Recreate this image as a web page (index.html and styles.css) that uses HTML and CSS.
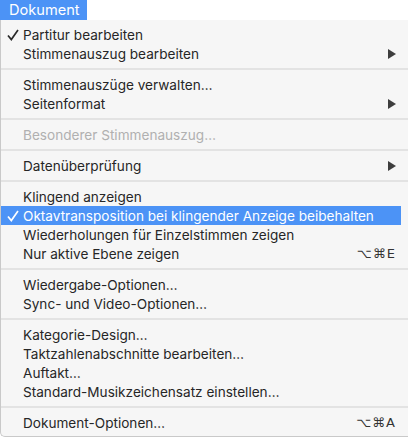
FILE: index.html
```html
<!DOCTYPE html>
<html>
<head>
<meta charset="utf-8">
<link rel="stylesheet" href="styles.css">
</head>
<body>
<div class="menubar"><span class="title">Dokument</span></div>
<div class="menu">
  <div class="item"><svg class="check" viewBox="0 0 12 12" width="12" height="12"><path d="M1 6.5 L4.3 10.5 L11 1" fill="none" stroke="currentColor" stroke-width="1.7" stroke-linejoin="miter"/></svg><span class="label">Partitur bearbeiten</span></div>
  <div class="item"><span class="label">Stimmenauszug bearbeiten</span><span class="arrow"></span></div>
  <div class="sep"></div>
  <div class="item"><span class="label">Stimmenauszüge verwalten…</span></div>
  <div class="item"><span class="label">Seitenformat</span><span class="arrow"></span></div>
  <div class="sep"></div>
  <div class="item disabled"><span class="label">Besonderer Stimmenauszug…</span></div>
  <div class="sep"></div>
  <div class="item"><span class="label">Datenüberprüfung</span><span class="arrow"></span></div>
  <div class="sep"></div>
  <div class="item"><span class="label">Klingend anzeigen</span></div>
  <div class="item active"><svg class="check" viewBox="0 0 12 12" width="12" height="12"><path d="M1 6.5 L4.3 10.5 L11 1" fill="none" stroke="currentColor" stroke-width="1.7" stroke-linejoin="miter"/></svg><span class="label">Oktavtransposition bei klingender Anzeige beibehalten</span></div>
  <div class="item"><span class="label">Wiederholungen für Einzelstimmen zeigen</span></div>
  <div class="item"><span class="label">Nur aktive Ebene zeigen</span><span class="key">⌥⌘E</span></div>
  <div class="sep"></div>
  <div class="item"><span class="label">Wiedergabe-Optionen…</span></div>
  <div class="item"><span class="label">Sync- und Video-Optionen…</span></div>
  <div class="sep"></div>
  <div class="item"><span class="label">Kategorie-Design…</span></div>
  <div class="item"><span class="label">Taktzahlenabschnitte bearbeiten…</span></div>
  <div class="item"><span class="label">Auftakt…</span></div>
  <div class="item"><span class="label">Standard-Musikzeichensatz einstellen…</span></div>
  <div class="sep"></div>
  <div class="item"><span class="label">Dokument-Optionen…</span><span class="key">⌥⌘A</span></div>
</div>
</body>
</html>
```
FILE: styles.css
```css
html, body {
  margin: 0;
  padding: 0;
  background: #ffffff;
}
body {
  width: 408px;
  height: 437px;
  overflow: hidden;
  font-family: Inter, "Noto Sans", "DejaVu Sans", sans-serif;
  font-size: 13.6px;
  color: #262626;
}
.menubar {
  height: 20px;
  display: flex;
}
.title {
  background: #4c93f6;
  color: #ffffff;
  width: 87px;
  padding-left: 9px;
  box-sizing: border-box;
  line-height: 20px;
  font-size: 14.6px;
}
.menu {
  background: #f6f6f6;
  border-left: 1px solid #c9c9c9;
  border-bottom: 1px solid #c9c9c9;
  border-bottom-left-radius: 5px;
  padding: 5px 0 4px 0;
  box-sizing: border-box;
  height: 417px;
}
.item {
  height: 19px;
  display: flex;
  align-items: center;
  position: relative;
  padding-left: 22px;
  padding-right: 12px;
}
.item .label {
  flex: 1;
  white-space: nowrap;
}
.check {
  position: absolute;
  left: 6px;
  top: 4px;
  color: #2a2a2a;
}
.active .check {
  color: #ffffff;
}
.active {
  background: #4c93f6;
  color: #ffffff;
  margin-right: 7px;
}
.disabled {
  color: #b0b0b0;
}
.arrow {
  width: 0;
  height: 0;
  border-top: 5px solid transparent;
  border-bottom: 5px solid transparent;
  border-left: 8px solid #3e3e3e;
}
.key {
  font-family: "DejaVu Sans", sans-serif;
  font-size: 13px;
  color: #333;
  letter-spacing: 1px;
}
.sep {
  height: 12px;
  display: flex;
  align-items: center;
}
.sep::before {
  content: "";
  flex: 1;
  height: 2px;
  background: #e3e3e3;
}
```
